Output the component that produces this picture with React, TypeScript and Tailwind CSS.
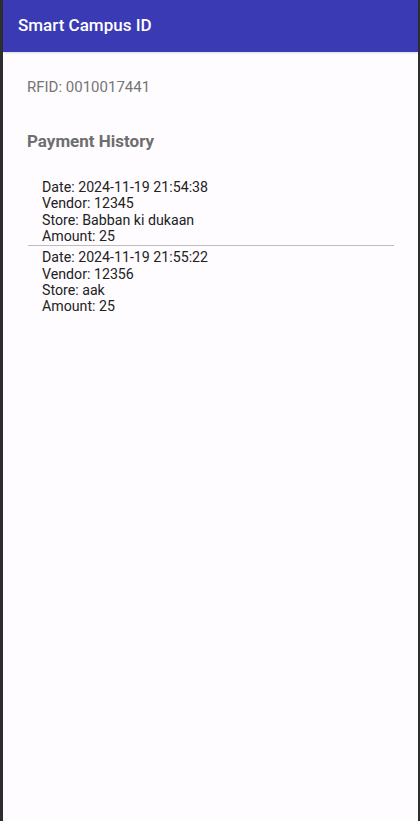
const payments = [
  { date: "2024-11-19 21:54:38", vendor: "12345", store: "Babban ki dukaan", amount: 25 },
  { date: "2024-11-19 21:55:22", vendor: "12356", store: "aak", amount: 25 },
];

const App = () => {
  return (
    <div className="flex h-[821px] w-[420px] bg-[#2e2e2e] font-['Roboto','Liberation_Sans',sans-serif]">
      <div className="ml-[3px] mr-[2px] flex flex-1 flex-col bg-[#fefcff]">
        <div className="flex h-[52px] items-center bg-[#3a3ab4] pl-[15px] shadow-[0_1px_2px_rgba(0,0,0,0.15)]">
          <span className="text-[17px] font-medium text-white">Smart Campus ID</span>
        </div>
        <div className="px-6 pt-[26px]">
          <div className="text-[15px] leading-[18px] text-[#757575]">RFID: 0010017441</div>
          <div className="mt-[35px] text-[17px] font-bold leading-[20px] text-[#6e6e6e]">Payment History</div>
          <div className="mt-[25px]">
            {payments.map((p, i) => (
              <div key={i}>
                {i > 0 && <div className="ml-[1px] h-[1.5px] bg-[#bdbdbd]" />}
                <div className="pl-[15px] pt-[3px] text-[14.2px] leading-[16.4px] text-[#222]">
                  <div>Date: {p.date}</div>
                  <div>Vendor: {p.vendor}</div>
                  <div>Store: {p.store}</div>
                  <div>Amount: {p.amount}</div>
                </div>
              </div>
            ))}
          </div>
        </div>
      </div>
    </div>
  );
};
export default App;
